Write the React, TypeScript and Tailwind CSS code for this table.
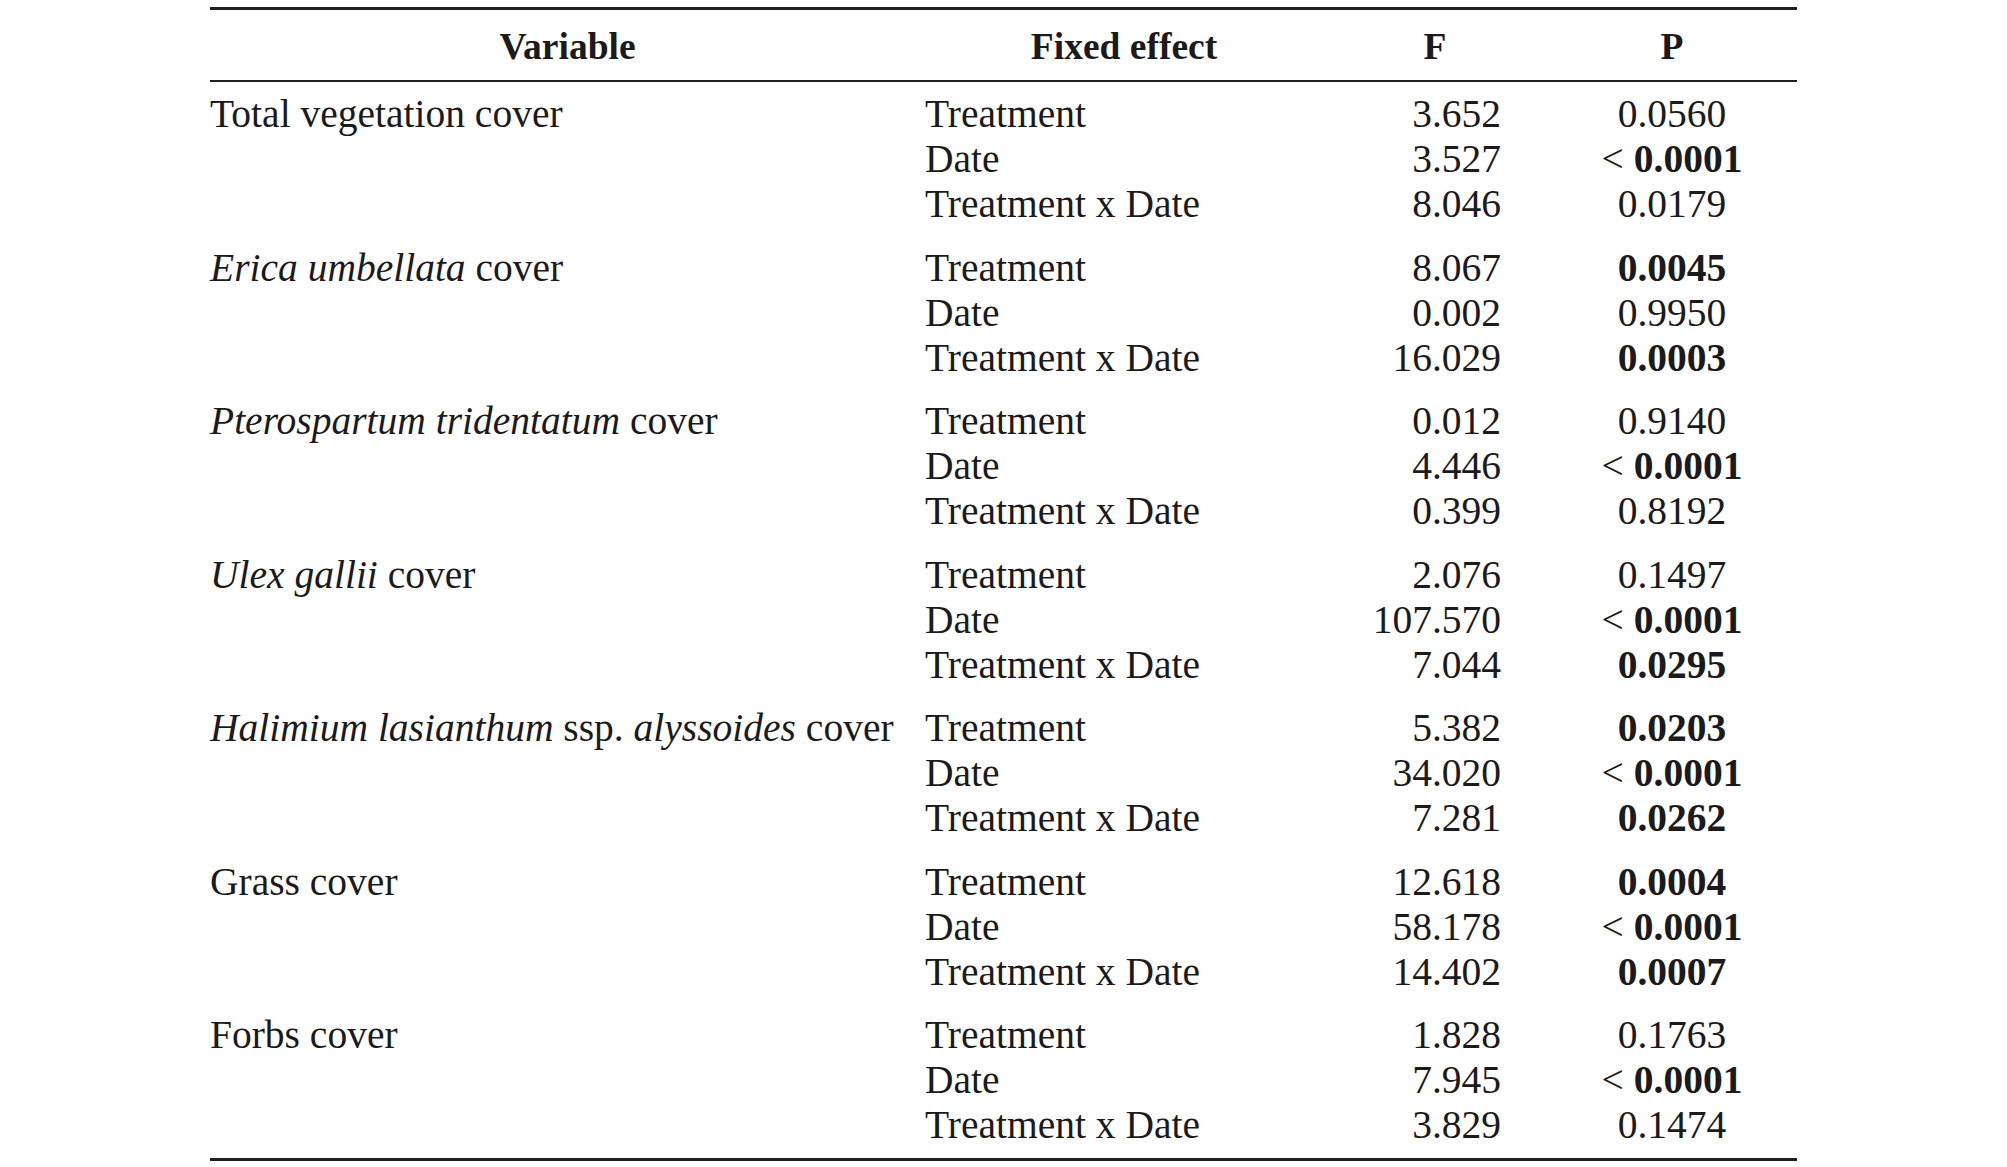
import type { ReactNode } from "react";

type Effect = { name: string; f: string; p: ReactNode };
type Group = { variable: ReactNode; effects: Effect[] };

const cols = "grid grid-cols-[715px_398px_224px_250px]";

const lt = (
  <>
    &lt; <b>0.0001</b>
  </>
);

function row(f: string, p: ReactNode, name: string): Effect {
  return { name, f, p };
}

const groups: Group[] = [
  {
    variable: "Total vegetation cover",
    effects: [
      row("3.652", "0.0560", "Treatment"),
      row("3.527", lt, "Date"),
      row("8.046", "0.0179", "Treatment x Date"),
    ],
  },
  {
    variable: (
      <>
        <i>Erica umbellata</i> cover
      </>
    ),
    effects: [
      row("8.067", <b>0.0045</b>, "Treatment"),
      row("0.002", "0.9950", "Date"),
      row("16.029", <b>0.0003</b>, "Treatment x Date"),
    ],
  },
  {
    variable: (
      <>
        <i>Pterospartum tridentatum</i> cover
      </>
    ),
    effects: [
      row("0.012", "0.9140", "Treatment"),
      row("4.446", lt, "Date"),
      row("0.399", "0.8192", "Treatment x Date"),
    ],
  },
  {
    variable: (
      <>
        <i>Ulex gallii</i> cover
      </>
    ),
    effects: [
      row("2.076", "0.1497", "Treatment"),
      row("107.570", lt, "Date"),
      row("7.044", <b>0.0295</b>, "Treatment x Date"),
    ],
  },
  {
    variable: (
      <>
        <i>Halimium lasianthum</i> ssp. <i>alyssoides</i> cover
      </>
    ),
    effects: [
      row("5.382", <b>0.0203</b>, "Treatment"),
      row("34.020", lt, "Date"),
      row("7.281", <b>0.0262</b>, "Treatment x Date"),
    ],
  },
  {
    variable: "Grass cover",
    effects: [
      row("12.618", <b>0.0004</b>, "Treatment"),
      row("58.178", lt, "Date"),
      row("14.402", <b>0.0007</b>, "Treatment x Date"),
    ],
  },
  {
    variable: "Forbs cover",
    effects: [
      row("1.828", "0.1763", "Treatment"),
      row("7.945", lt, "Date"),
      row("3.829", "0.1474", "Treatment x Date"),
    ],
  },
];

export default function App() {
  return (
    <div className="min-h-screen bg-white pl-[210px] pt-[7px] font-['Liberation_Serif','Times_New_Roman',serif] text-[#1c1a1b]">
      <div className="w-[1587px] border-y-[3px] border-[#231f20]">
        <div
          className={`${cols} h-[72px] items-center border-b-2 border-[#231f20] pt-[4px] text-center text-[37.5px] font-bold`}
        >
          <div>Variable</div>
          <div>Fixed effect</div>
          <div>F</div>
          <div>P</div>
        </div>

        <div className="flex flex-col gap-[18.5px] pt-[10px] pb-[10px] text-[39.5px] leading-[45px]">
          {groups.map((group, i) => (
            <div key={i} className={`${cols} grid-rows-[45px_45px_45px]`}>
              <div className="row-span-3 whitespace-nowrap">{group.variable}</div>
              {group.effects.map((effect) => (
                <div key={effect.name} className="contents">
                  <div className="col-start-2 whitespace-nowrap">{effect.name}</div>
                  <div className="pr-[46px] text-right">{effect.f}</div>
                  <div className="text-center whitespace-nowrap">{effect.p}</div>
                </div>
              ))}
            </div>
          ))}
        </div>
      </div>
    </div>
  );
}
